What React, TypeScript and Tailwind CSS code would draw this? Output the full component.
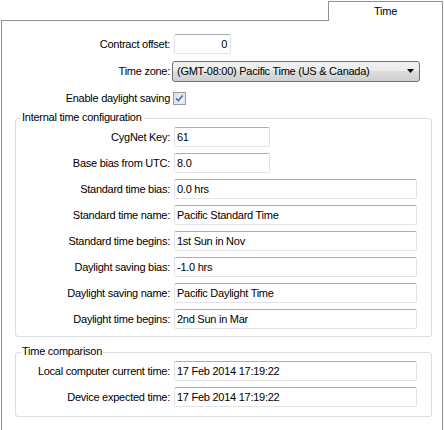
import React from "react";

const inputCls =
  "h-[20px] border border-[#e2e3ea] border-t-[#abadb3] rounded-[2px] bg-white flex items-center px-[2px] whitespace-nowrap";

function Row({ label, value, short }: { label: string; value: string; short?: boolean }) {
  return (
    <div className="flex items-center h-[20px]">
      <div className="w-[154px] text-right whitespace-nowrap">{label}</div>
      <div className={`${inputCls} ml-[4px] ${short ? "w-[96px]" : "w-[243px]"}`}>{value}</div>
    </div>
  );
}

function Group({
  title,
  children,
  pb,
}: {
  title: string;
  children: React.ReactNode;
  pb: string;
}) {
  return (
    <div
      className={`relative ml-[13px] w-[417px] border border-[#d5dfe5] rounded-[3px] pt-[8px] ${pb}`}
    >
      <div className="absolute -top-[8px] left-[5px] bg-white px-[1px] leading-[13px] whitespace-nowrap">
        {title}
      </div>
      <div className="flex flex-col gap-[6px]">{children}</div>
    </div>
  );
}

export default function App() {
  return (
    <div className="w-[444px] h-[430px] bg-white text-[11px] leading-[13px] text-black overflow-hidden px-[1px] font-['Liberation_Sans',Arial,sans-serif] tracking-[-0.26px]">
      <div className="flex h-[21px]">
        <div className="flex-1 border-b border-[#919191]" />
        <div className="w-[115px] mt-[1px] h-[20px] border-t border-x border-[#919191] flex items-center justify-center">
          Time
        </div>
      </div>
      <div className="h-[409px] border-x border-[#919191] pt-[13px]">
        <div className="flex items-center h-[20px]">
          <div className="w-[168px] text-right whitespace-nowrap">Contract offset:</div>
          <div className={`${inputCls} ml-[4px] w-[57px] justify-end pr-[3px]`}>0</div>
        </div>
        <div className="flex items-center h-[21px] mt-[7px]">
          <div className="w-[168px] text-right whitespace-nowrap">Time zone:</div>
          <div className="ml-[2px] w-[248px] h-[21px] border border-[#707070] rounded-[3px] bg-[linear-gradient(to_bottom,#f2f2f2_0%,#ebebeb_50%,#dddddd_50%,#cfcfcf_100%)] flex items-center justify-between pl-[4px] pr-[4px] whitespace-nowrap">
            <span>(GMT-08:00) Pacific Time (US &amp; Canada)</span>
            <svg width="8" height="5" viewBox="0 0 8 5">
              <polygon points="0,0 7,0 3.5,4" fill="#000" />
            </svg>
          </div>
        </div>
        <div className="flex items-center h-[13px] mt-[10px]">
          <div className="w-[168px] text-right whitespace-nowrap">Enable daylight saving</div>
          <svg className="ml-[3px]" width="13" height="13" viewBox="0 0 13 13">
            <defs>
              <linearGradient id="cb" x1="0" y1="0" x2="1" y2="1">
                <stop offset="0" stopColor="#e2e6ee" />
                <stop offset="1" stopColor="#f8f9fb" />
              </linearGradient>
            </defs>
            <rect x="0.5" y="0.5" width="12" height="12" fill="#f4f4f4" stroke="#9a9a9a" />
            <rect x="2" y="2" width="9" height="9" fill="url(#cb)" stroke="#c4c8d0" strokeWidth="0.6" />
            <path d="M3.2 6.4 L5.4 8.8 L9.6 3.4" fill="none" stroke="#4a6cb3" strokeWidth="1.7" />
          </svg>
        </div>
        <div className="mt-[13px]">
          <Group title="Internal time configuration" pb="pb-[7px]">
            <Row label="CygNet Key:" value="61" short />
            <Row label="Base bias from UTC:" value="8.0" short />
            <Row label="Standard time bias:" value="0.0 hrs" />
            <Row label="Standard time name:" value="Pacific Standard Time" />
            <Row label="Standard time begins:" value="1st Sun in Nov" />
            <Row label="Daylight saving bias:" value="-1.0 hrs" />
            <Row label="Daylight saving name:" value="Pacific Daylight Time" />
            <Row label="Daylight time begins:" value="2nd Sun in Mar" />
          </Group>
        </div>
        <div className="mt-[15px]">
          <Group title="Time comparison" pb="pb-[9px]">
            <Row label="Local computer current time:" value="17 Feb 2014 17:19:22" />
            <Row label="Device expected time:" value="17 Feb 2014 17:19:22" />
          </Group>
        </div>
      </div>
    </div>
  );
}
